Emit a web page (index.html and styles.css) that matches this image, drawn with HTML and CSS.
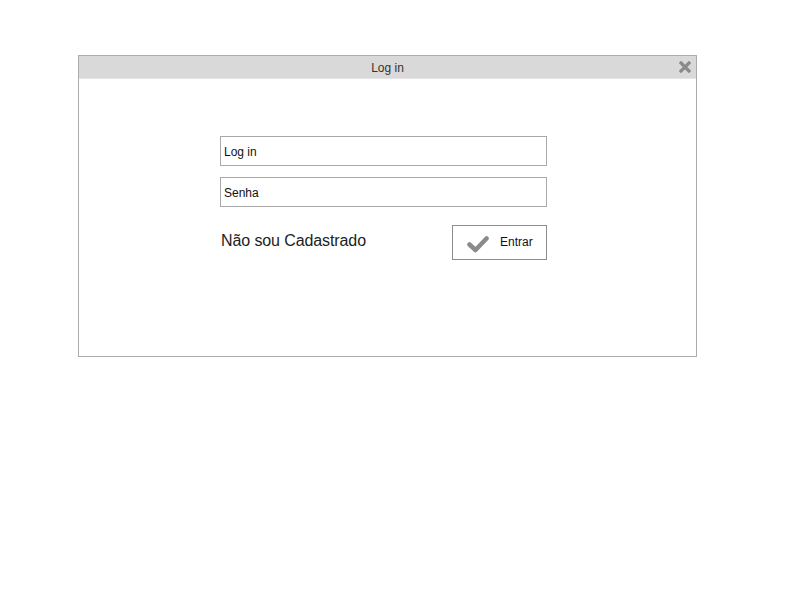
FILE: index.html
```html
<!DOCTYPE html>
<html>
<head>
<meta charset="utf-8">
<link rel="stylesheet" href="styles.css">
</head>
<body>
<div class="window">
  <div class="titlebar">
    <span class="title">Log in</span>
    <svg class="close" width="12" height="12" viewBox="0 0 12 12">
      <path d="M2 2 L10 10 M10 2 L2 10" stroke="#8a8a8a" stroke-width="3.2" stroke-linecap="square"/>
    </svg>
  </div>
  <div class="content">
    <div class="form">
      <div class="field">Log in</div>
      <div class="field">Senha</div>
      <div class="actions">
        <span class="link">Não sou Cadastrado</span>
        <div class="button">
          <svg class="check" width="22" height="18" viewBox="0 0 22 18">
            <path d="M2.5 9.5 L8.5 15 L19.5 3.5" fill="none" stroke="#8a8a8a" stroke-width="4.5" stroke-linejoin="round" stroke-linecap="round"/>
          </svg>
          <span class="label">Entrar</span>
        </div>
      </div>
    </div>
  </div>
</div>
</body>
</html>
```
FILE: styles.css
```css
html, body {
  margin: 0;
  padding: 0;
  background: #ffffff;
}
body {
  font-family: "Liberation Sans", Arial, sans-serif;
  color: #222;
}
.window {
  margin-left: 78px;
  margin-top: 55px;
  width: 617px;
  height: 300px;
  border: 1px solid #acacac;
  display: flex;
  flex-direction: column;
}
.titlebar {
  position: relative;
  height: 22px;
  background: #d9d9d9;
  border-bottom: 1px solid #e4e4e4;
  display: flex;
  align-items: center;
  justify-content: center;
}
.title {
  font-size: 12px;
  color: #333;
  line-height: 22px;
  padding-top: 2px;
}
.close {
  position: absolute;
  right: 5px;
  top: 5px;
}
.content {
  flex: 1;
  padding-top: 57px;
  padding-left: 141px;
}
.form {
  width: 327px;
  display: flex;
  flex-direction: column;
  gap: 11px;
}
.field {
  box-sizing: border-box;
  height: 30px;
  border: 1px solid #aaaaaa;
  padding-left: 3px;
  font-size: 12px;
  line-height: 30px;
  color: #111;
}
.actions {
  margin-top: 7px;
  display: flex;
  justify-content: space-between;
  align-items: flex-start;
}
.link {
  font-size: 16px;
  padding-left: 1px;
  padding-top: 7px;
  letter-spacing: -0.1px;
  color: #222;
}
.button {
  box-sizing: border-box;
  width: 95px;
  height: 35px;
  border: 1px solid #8c8c8c;
  display: flex;
  align-items: center;
  padding-left: 14px;
  gap: 11px;
  font-size: 12px;
  color: #111;
}
.label {
  margin-top: -2px;
}
.check {
  margin-top: 2px;
}
```
